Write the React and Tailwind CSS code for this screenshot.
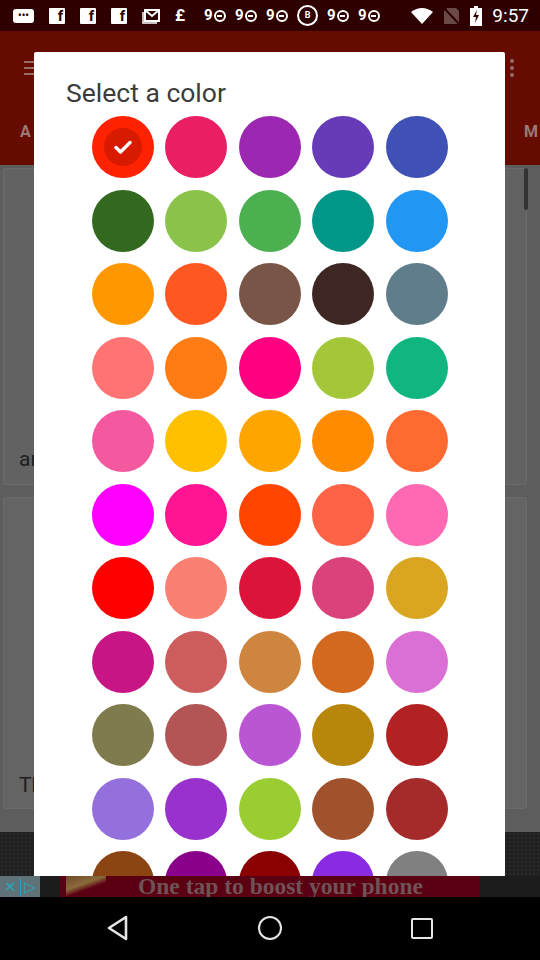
import React from 'react'

/* ── palette, row by row ── */
const ROWS = [
  ['#fe2200', '#e91e63', '#9c27b0', '#673ab7', '#3f51b5'],
  ['#33691e', '#8bc34a', '#4caf50', '#009688', '#2196f3'],
  ['#ff9800', '#ff5722', '#795548', '#3e2723', '#607d8b'],
  ['#ff7373', '#ff7b13', '#ff0080', '#a4c639', '#10b57f'],
  ['#f4589f', '#ffc000', '#ffa500', '#ff8c00', '#ff6a30'],
  ['#ff00ff', '#ff1493', '#ff4500', '#ff6347', '#ff69b4'],
  ['#ff0000', '#fa8072', '#dc143c', '#d9427a', '#daa520'],
  ['#c71585', '#cd5c5c', '#cd853f', '#d2691e', '#da70d6'],
  ['#7e7b4c', '#b35555', '#ba55d3', '#b8860b', '#b22222'],
  ['#9370db', '#9932cc', '#9acd32', '#a0522d', '#a52a2a'],
  ['#8b4513', '#8b008b', '#8b0000', '#8a2be2', '#808080'],
]

const font = { fontFamily: 'Roboto, "Noto Sans", sans-serif' }

function FBox() {
  return (
    <span className="flex h-[16px] w-[16px] items-end justify-end rounded-[1px] bg-white pr-[2px] text-[15px] font-bold leading-[15px] text-[#2e0100]">f</span>
  )
}

function Ninety() {
  return (
    <span className="flex w-[22px] items-center text-[15px] font-bold leading-none text-white">
      9<span className="ml-[1px] flex h-[12px] w-[12px] items-center justify-center rounded-full border-2 border-white">
        <span className="h-[2px] w-[5px] bg-white" />
      </span>
    </span>
  )
}

function StatusBar() {
  return (
    <div className="flex h-[31px] shrink-0 items-center bg-[#2e0100] pl-[13px] pr-[11px]" style={font}>
      <div className="flex items-center gap-[15px]">
        <span className="flex h-[14px] w-[21px] items-center justify-center rounded-[3px] bg-white text-[10px] font-bold leading-none text-[#2e0100]">•••</span>
        <FBox />
        <FBox />
        <FBox />
        <svg width="18" height="16" viewBox="0 0 18 16">
          <path d="M3 2h14v11H3z" fill="none" stroke="#fff" strokeWidth="2" />
          <path d="M3 2l7 6 7-6" fill="none" stroke="#fff" strokeWidth="2" />
          <path d="M1 4v11h14" fill="none" stroke="#fff" strokeWidth="1.5" />
        </svg>
        <span className="text-[17px] font-bold leading-none text-white">£</span>
      </div>
      <div className="ml-[19px] flex items-center gap-[9px]">
        <Ninety />
        <Ninety />
        <Ninety />
        <span className="flex h-[21px] w-[21px] items-center justify-center rounded-full border-2 border-white text-[9px] font-bold text-white">B</span>
        <Ninety />
        <Ninety />
      </div>
      <div className="ml-auto flex items-center gap-[10px]">
        <svg width="22" height="16" viewBox="0 0 22 16">
          <path d="M0 4Q11 -4 22 4L11 16z" fill="#fff" />
        </svg>
        <svg width="17" height="18" viewBox="0 0 17 18">
          <path d="M4 1h9l3 3v13H1V4z" fill="#6b4a46" />
          <path d="M1 1l15 16" stroke="#2e0100" strokeWidth="2" />
        </svg>
        <svg width="12" height="20" viewBox="0 0 12 20">
          <path d="M4 0h4v2h4v18H0V2h4z" fill="#fff" />
          <path d="M7 4L3 11h3l-1 6 4-8H6z" fill="#2e0100" />
        </svg>
        <span className="text-[19px] leading-none text-white">9:57</span>
      </div>
    </div>
  )
}

function AppBar() {
  return (
    <div className="relative flex h-[134px] shrink-0 flex-col bg-[#650b00]" style={font}>
      <div className="flex h-[74px] items-center justify-between pl-[24px] pr-[26px]">
        <div className="flex w-[13px] flex-col gap-[4px]">
          <span className="h-[2px] bg-[#9a6c68]" />
          <span className="h-[2px] bg-[#9a6c68]" />
          <span className="h-[2px] bg-[#9a6c68]" />
        </div>
        <div className="flex flex-col gap-[3px]">
          <span className="h-[4px] w-[4px] rounded-full bg-[#9a6c68]" />
          <span className="h-[4px] w-[4px] rounded-full bg-[#9a6c68]" />
          <span className="h-[4px] w-[4px] rounded-full bg-[#9a6c68]" />
        </div>
      </div>
      <div className="flex flex-1 items-center justify-between pl-[20px] pr-[2px] pb-[6px] text-[16px] font-bold text-[#9a7a76]">
        <span>A</span>
        <span>M</span>
      </div>
    </div>
  )
}

function Content() {
  return (
    <div className="relative flex h-[667px] shrink-0 flex-col gap-[12px] bg-[#5d5d5d] pt-[3px] pl-[3px] pr-[13px]" style={font}>
      <div className="flex h-[317px] flex-col justify-end rounded-[2px] border border-[#6b6b6b] bg-[#626262] pb-[14px] pl-[15px]">
        <span className="text-[21px] leading-none text-[#1e1e1e]">ar</span>
      </div>
      <div className="flex h-[312px] flex-col justify-end rounded-[3px] border border-[#6b6b6b] bg-[#646464] pb-[12px] pl-[15px]">
        <span className="text-[21px] leading-none text-[#1e1e1e]">Th</span>
      </div>
      {/* scroll thumb */}
      <span className="absolute right-[12px] top-[3px] h-[42px] w-[4px] rounded-full bg-[#333]" />
    </div>
  )
}

function AdStrip() {
  return (
    <>
      <div className="h-[44px] shrink-0 bg-[#202020] bg-[radial-gradient(#2a2a2a_1px,transparent_1px)] bg-[length:4px_4px]" />
      <div className="flex h-[21px] shrink-0 items-stretch bg-[#1c1c1c]">
        <div className="flex w-[40px] items-center justify-center gap-[3px] bg-[#5e7278] text-[15px] leading-none text-[#2aa3b8]">
          <span>✕</span>
          <span className="h-[18px] w-px bg-[#2aa3b8]" />
          <span>▷</span>
        </div>
        <div className="ml-[20px] flex w-[420px] items-end bg-[#5b0012]">
          <span className="ml-[6px] h-[21px] w-[40px] bg-[linear-gradient(160deg,#6e4a2a_0%,#8a6a3a_40%,transparent_60%)]" />
          <span
            className="ml-[32px] text-[23.5px] font-bold leading-[21px] text-[#6f5256]"
            style={{ fontFamily: '"Liberation Serif", serif' }}
          >
            One tap to boost your phone
          </span>
        </div>
      </div>
    </>
  )
}

function NavBar() {
  return (
    <div className="flex h-[63px] shrink-0 items-center bg-black pb-[1px]">
      <div className="flex w-[236px] justify-center">
        <svg width="24" height="26" viewBox="0 0 24 26">
          <path d="M20 2L3 13l17 11z" fill="none" stroke="#e6e6e6" strokeWidth="2.6" strokeLinejoin="round" />
        </svg>
      </div>
      <div className="flex w-[68px] justify-center">
        <span className="h-[24px] w-[24px] rounded-full border-[2.6px] border-[#e6e6e6]" />
      </div>
      <div className="flex w-[236px] justify-center">
        <span className="h-[21px] w-[22px] rounded-[2px] border-[2.6px] border-[#e6e6e6]" />
      </div>
    </div>
  )
}

function Swatch({ color, selected }) {
  return (
    <div className="flex h-[62px] w-[62px] items-center justify-center rounded-full" style={{ background: color }}>
      {selected && (
        <div className="flex h-[38px] w-[38px] items-center justify-center rounded-full bg-[#d81a00]">
          <svg width="18" height="14" viewBox="0 0 18 14">
            <path d="M2 7.5l4.5 4.5L16 2.5" fill="none" stroke="#fff" strokeWidth="3.4" strokeLinecap="round" strokeLinejoin="round" />
          </svg>
        </div>
      )}
    </div>
  )
}

function ColorDialog() {
  return (
    <div className="absolute left-[34px] top-[52px] flex h-[824px] w-[471px] flex-col overflow-hidden rounded-t-[2px] bg-white" style={font}>
      <h2 className="pl-[32px] pt-[26px] text-[26.5px] leading-[30px] text-[#3c3c3c]">Select a color</h2>
      <div className="mx-auto mt-[8px] grid w-[356px] grid-cols-5 gap-x-[11.5px] gap-y-[11.5px]">
        {ROWS.flat().map((c, i) => (
          <Swatch key={i} color={c} selected={i === 0} />
        ))}
      </div>
    </div>
  )
}

export default function App() {
  return (
    <div className="relative flex h-[960px] w-[540px] flex-col overflow-hidden bg-black">
      <StatusBar />
      <AppBar />
      <Content />
      <AdStrip />
      <NavBar />
      <ColorDialog />
    </div>
  )
}
